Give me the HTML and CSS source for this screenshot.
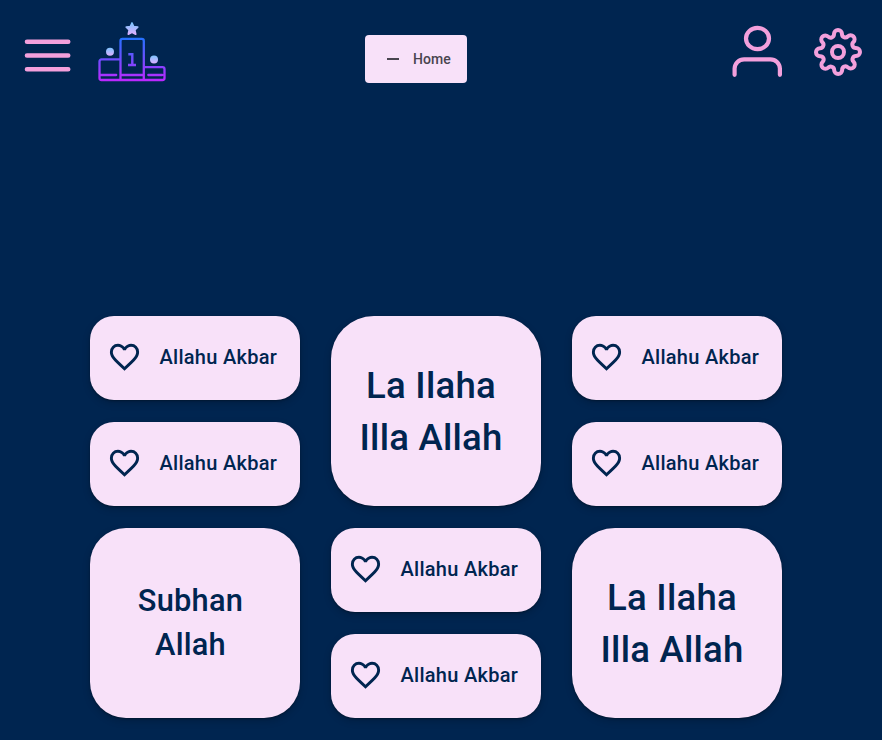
FILE: index.html
```html
<!DOCTYPE html>
<html lang="en">
<head>
<meta charset="utf-8">
<title>Home</title>
<link rel="stylesheet" href="styles.css">
</head>
<body>
<svg class="defs" width="0" height="0" aria-hidden="true">
  <symbol id="heart" viewBox="0 -960 960 960">
    <path d="m480-120-58-52q-101-91-167-157T150-447.5Q111-500 95.5-544T80-634q0-94 63-157t157-63q52 0 99 22t81 62q34-40 81-62t99-22q94 0 157 63t63 157q0 46-15.5 90T810-447.5Q771-395 705-329T538-172l-58 52Zm0-108q96-86 158-147.5t98-107q36-45.5 50-81t14-70.5q0-60-40-100t-100-40q-47 0-87 26.5T518-680h-76q-15-41-55-67.5T300-774q-60 0-100 40t-40 100q0 35 14 70.5t50 81q36 45.5 98 107T480-228Z"/>
  </symbol>
</svg>
<header class="topbar">
  <svg class="menu" viewBox="0 0 48 36"><path d="M3 4.700h41.200M3 18.500h41.200M3 32.300h41.200"/></svg>
  <svg class="podium" viewBox="0 0 70 60">
    <defs>
      <linearGradient id="base" gradientUnits="userSpaceOnUse" x1="0" y1="16" x2="0" y2="60"><stop offset="0" stop-color="#2472ff"/><stop offset="1" stop-color="#c026ff"/></linearGradient>
      <linearGradient id="top" x1="0" y1="0" x2="0" y2="1"><stop offset="0" stop-color="#7cc4ff"/><stop offset="1" stop-color="#dcb0ff"/></linearGradient>
    </defs>
    <path class="star" d="M35 1l1.700 3.600 4 .6-2.900 2.800.9 4.200-3.700-2-3.700 2 .9-4.200-2.900-2.800 4-.6z"/>
    <circle fill="url(#top)" cx="13" cy="29.700" r="4"/><circle fill="url(#top)" cx="57" cy="37.400" r="4"/>
    <path class="frame" d="M23.500 58V18.900a2 2 0 0 1 2-2h19.300a2 2 0 0 1 2 2V58M23.500 37.400h-19a2 2 0 0 0-2 2V56a2 2 0 0 0 2 2h61a2 2 0 0 0 2-2V47.200a2 2 0 0 0-2-2H46.800M4 53h15.200M24 53h22.500M51.300 53h14"/>
    <path class="frame numeral" d="M31.300 32.200h4V43M31 43h8"/>
  </svg>
  <nav class="tab"><span class="dash"></span><span>Home</span></nav>
  <svg class="user" viewBox="0 0 52 52"><ellipse cx="26.500" cy="13.500" rx="11.500" ry="10.600"/><path d="M3.600 49.800V43.500A9.500 9.500 0 0 1 13.100 34.300h26.300a9.500 9.500 0 0 1 9.500 9.200V49.800"/></svg>
  <svg class="gear" viewBox="0 0 24 24"><circle cx="12" cy="12" r="3"/><path d="M19.400 15a1.650 1.650 0 0 0 .33 1.820l.06.06a2 2 0 0 1 0 2.830 2 2 0 0 1-2.830 0l-.06-.06a1.650 1.650 0 0 0-1.820-.33 1.650 1.650 0 0 0-1 1.510V21a2 2 0 0 1-2 2 2 2 0 0 1-2-2v-.09A1.650 1.650 0 0 0 9 19.400a1.650 1.650 0 0 0-1.820.33l-.06.06a2 2 0 0 1-2.830 0 2 2 0 0 1 0-2.830l.06-.06a1.650 1.650 0 0 0 .33-1.820 1.650 1.650 0 0 0-1.510-1H3a2 2 0 0 1-2-2 2 2 0 0 1 2-2h.09A1.650 1.650 0 0 0 4.600 9a1.650 1.650 0 0 0-.33-1.820l-.06-.06a2 2 0 0 1 0-2.830 2 2 0 0 1 2.830 0l.06.06a1.650 1.650 0 0 0 1.820.33H9a1.650 1.650 0 0 0 1-1.510V3a2 2 0 0 1 2-2 2 2 0 0 1 2 2v.09a1.650 1.650 0 0 0 1 1.510 1.650 1.650 0 0 0 1.820-.33l.06-.06a2 2 0 0 1 2.830 0 2 2 0 0 1 0 2.830l-.06.06a1.650 1.650 0 0 0-.33 1.820V9a1.650 1.650 0 0 0 1.510 1H21a2 2 0 0 1 2 2 2 2 0 0 1-2 2h-.09a1.650 1.650 0 0 0-1.510 1z"/></svg>
</header>
<main class="board">
  <div class="column">
    <button class="card small"><svg class="heart"><use href="#heart"/></svg><span>Allahu Akbar</span></button>
    <button class="card small"><svg class="heart"><use href="#heart"/></svg><span>Allahu Akbar</span></button>
    <button class="card medium">Subhan<br>Allah</button>
  </div>
  <div class="column">
    <button class="card large">La Ilaha<br>Illa Allah</button>
    <button class="card small"><svg class="heart"><use href="#heart"/></svg><span>Allahu Akbar</span></button>
    <button class="card small"><svg class="heart"><use href="#heart"/></svg><span>Allahu Akbar</span></button>
  </div>
  <div class="column">
    <button class="card small"><svg class="heart"><use href="#heart"/></svg><span>Allahu Akbar</span></button>
    <button class="card small"><svg class="heart"><use href="#heart"/></svg><span>Allahu Akbar</span></button>
    <button class="card large">La Ilaha<br>Illa Allah</button>
  </div>
</main>
</body>
</html>
```
FILE: styles.css
```css
* { box-sizing: border-box; }
body {
  margin: 0;
  height: 740px;
  overflow: hidden;
  background: #002550;
  font-family: Roboto, "Liberation Sans", sans-serif;
  font-weight: 500;
}
.defs { display: none; }
svg { display: block; flex: none; }
.topbar { display: flex; align-items: flex-start; height: 316px; padding-left: 24px; }
.menu, .user, .gear { fill: none; stroke: #f3a0dc; stroke-linecap: round; stroke-linejoin: round; }
.menu { width: 48px; height: 36px; margin-top: 37px; stroke-width: 4.6; }
.podium { width: 70px; height: 60px; margin: 22px 0 0 25px; }
.frame { fill: none; stroke: url(#base); stroke-width: 2.3; stroke-linecap: round; stroke-linejoin: round; }
.numeral { stroke-width: 2.4; stroke-linecap: butt; stroke-linejoin: miter; }
.star { fill: url(#top); stroke: url(#top); stroke-width: 1.7; stroke-linejoin: round; }
.tab {
  display: flex;
  align-items: center;
  gap: 14px;
  width: 102px;
  height: 48px;
  margin: 35px 0 0 198px;
  padding-left: 22px;
  border-radius: 4px;
  background: #f8e1f9;
  color: #49454f;
  font-size: 14px;
  line-height: 20px;
  letter-spacing: .1px;
}
.dash { width: 12px; height: 2px; background: #49454f; }
.user { width: 52px; height: 52px; margin: 25px 0 0 264px; stroke-width: 4.2; }
.gear { width: 48px; height: 48px; margin: 28px 0 0 31px; stroke-width: 2; }
.board { display: flex; gap: 31px; padding-left: 90px; }
.column { display: flex; flex-direction: column; gap: 22px; width: 210px; }
.card {
  display: flex;
  align-items: center;
  margin: 0;
  border: 0;
  background: #f8e1f9;
  color: #002550;
  font: inherit;
  box-shadow: 0 1px 2px rgba(0, 0, 0, .3), 0 3px 7px 1px rgba(0, 0, 0, .15);
}
.small { height: 84px; padding: 0 0 1px 17px; border-radius: 24px; font-size: 20px; line-height: 28px; letter-spacing: .28px; }
.small span { padding-bottom: 1px; }
.heart { width: 35px; height: 35px; margin-right: 17.5px; fill: #002550; }
.medium, .large { justify-content: center; height: 190px; padding: 0 9px 0 0; text-align: center; }
.medium { border-radius: 36px; font-size: 30.8px; line-height: 44px; letter-spacing: .22px; }
.large { border-radius: 43px; padding: 1px 10px 0 0; font-size: 36.6px; line-height: 52px; letter-spacing: .22px; }
```
